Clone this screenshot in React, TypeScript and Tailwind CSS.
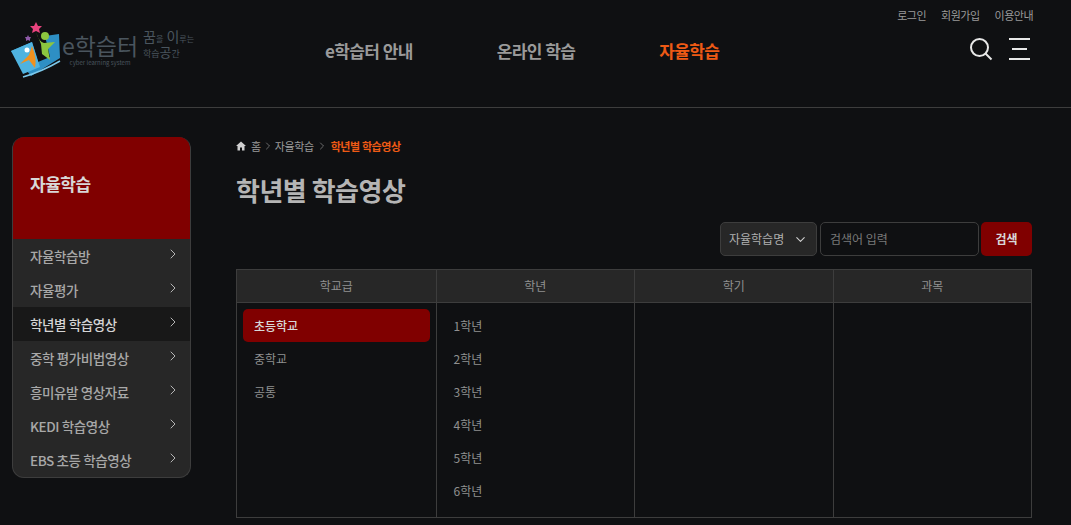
import { ChevronDown, ChevronRight } from "lucide-react";

const menu = ["자율학습방", "자율평가", "학년별 학습영상", "중학 평가비법영상", "흥미유발 영상자료", "KEDI 학습영상", "EBS 초등 학습영상"];
const columns = ["학교급", "학년", "학기", "과목"];
const grades = ["1학년", "2학년", "3학년", "4학년", "5학년", "6학년"];

const Logo = () => (
  <div className="flex items-start w-[190px] h-[60px]">
    <svg width="50" height="60" viewBox="0 0 50 60" className="shrink-0">
      <path d="M0 31 L21 22 L27 42 L39 37 L34 16 L48 14 L49 38 L20 56 Z" fill="#2e8fc4" />
      <path d="M0 31 L21 22 L29 47 L12 54 Z" fill="#4fb3e0" />
      <path d="M12 57 Q30 52 49 41" stroke="#7cc8ea" strokeWidth="1.5" fill="none" />
      <path d="M21 26 Q26 38 24 48 L18 40 L9 44 L18 35 Z" fill="#f0911e" />
      <circle cx="16" cy="30" r="2.5" fill="#fff" />
      <path d="M25 12 Q28 22 33 23 L44 22 L37 29 L39 40 L31 34 L30 24 Z" fill="#8cc63f" />
      <circle cx="34" cy="16" r="4" fill="#8cc63f" />
      <path d="M25 2 L27 6 L31 6 L28 9 L29 13 L25 11 L21 13 L22 9 L19 6 L23 6 Z" fill="#e8437e" />
      <path d="M17 15 L18 17 L20 17 L19 19 L19 21 L17 20 L15 21 L15 19 L14 17 L16 17 Z" fill="#8e5aa8" />
    </svg>
    <div className="ml-[3px] mt-[11px] flex flex-col items-center w-[72px]">
      <span className="text-[23px] leading-[28px] text-[#4a555e] whitespace-nowrap">e학습터</span>
      <span className="text-[6px] leading-[8px] text-[#4a555e] whitespace-nowrap">cyber learning system</span>
    </div>
    <div className="ml-[7px] mt-[9px] flex flex-col text-[#4a555e] leading-none whitespace-nowrap">
      <span className="text-[14px]">꿈<span className="text-[8px]">을</span> 이<span className="text-[8px]">루는</span></span>
      <span className="text-[9px] mt-[2px]">학습<span className="text-[13px]">공</span>간</span>
    </div>
  </div>
);

const Header = () => (
  <header className="h-[108px] border-b border-[#3d3d3d] flex relative">
    <div className="pl-[11px] pt-[20px]"><Logo /></div>
    <nav className="flex gap-[84px] pl-[124px] pt-[38px] text-[17px] leading-[25px] font-bold tracking-[-0.6px] text-[#9a9a9a]">
      <span>e학습터 안내</span>
      <span>온라인 학습</span>
      <span className="text-[#ee5a15]">자율학습</span>
    </nav>
    <div className="absolute right-[38px] top-[7px] flex gap-[15px] text-[11px] leading-[16px] text-[#9a9a9a] tracking-[-0.5px]">
      <span>로그인</span>
      <span>회원가입</span>
      <span>이용안내</span>
    </div>
    <div className="absolute right-[41px] top-[37px] flex items-center gap-[16px]">
      <svg width="24" height="24" viewBox="0 0 24 24" fill="none" stroke="#e8e8e8" strokeWidth="2">
        <circle cx="10.5" cy="10.5" r="8.5" />
        <path d="M16.5 16.5 L22.5 22.5" />
      </svg>
      <div className="w-[21px] flex flex-col items-end gap-[8px]">
        <span className="h-[2px] w-[21px] bg-[#e8e8e8]" />
        <span className="h-[2px] w-[15px] bg-[#e8e8e8] mr-[3px]" />
        <span className="h-[2px] w-[21px] bg-[#e8e8e8]" />
      </div>
    </div>
  </header>
);

const Sidebar = () => (
  <aside className="w-[179px] shrink-0 h-[341px] rounded-[12px] overflow-hidden bg-[#272727] border-b border-x border-[#3d3d3d] box-border">
    <div className="h-[102px] -mx-px bg-[#800000] pl-[18px] pt-[33px] text-[17px] leading-[28px] font-bold text-[#d8d8d8] tracking-[-0.5px]">자율학습</div>
    <ul>
      {menu.map((m, i) => (
        <li key={m} className={`h-[34px] flex items-center justify-between pl-[17px] pr-[9px] text-[13.5px] font-medium tracking-[-0.4px] ${i === 2 ? "bg-[#181818] text-[#d5d5d5]" : "text-[#a8a8a8]"}`}>
          <span>{m}</span>
          <ChevronRight size={16} strokeWidth={1.5} className="text-[#b5b5b5] -mt-[4px]" />
        </li>
      ))}
    </ul>
  </aside>
);

const Breadcrumb = () => (
  <div className="flex items-center h-[16px] text-[11px] tracking-[-0.4px] text-[#9a9a9a]">
    <svg width="10" height="10" viewBox="0 0 10 10" fill="#d0d0d0"><path d="M5 0.5 L10 5 H8.5 V9.5 H6 V6.5 H4 V9.5 H1.5 V5 H0 Z" /></svg>
    <span className="ml-[5px]">홈</span>
    <ChevronRight size={12} strokeWidth={1.3} className="mx-[1px]" />
    <span>자율학습</span>
    <ChevronRight size={12} strokeWidth={1.3} className="mx-[2px]" />
    <span className="font-bold text-[#ee5a15] ml-[1px]">학년별 학습영상</span>
  </div>
);

const SearchBar = () => (
  <div className="flex justify-end gap-[3px] h-[34px] mt-[13px]">
    <div className="w-[97px] rounded-[5px] border border-[#3d3d3d] bg-[#272727] flex items-center justify-between pl-[8px] pr-[8px] text-[12px] text-[#b0b0b0]">
      <span>자율학습명</span>
      <ChevronDown size={15} strokeWidth={1.7} className="text-[#d0d0d0]" />
    </div>
    <div className="w-[159px] rounded-[5px] border border-[#3d3d3d] flex items-center pl-[9px] text-[12px] text-[#7a7a7a]">검색어 입력</div>
    <button className="w-[51px] ml-[-1px] rounded-[5px] bg-[#800000] text-[12px] font-bold text-[#d8d8d8]">검색</button>
  </div>
);

const Table = () => (
  <div className="mt-[13px] h-[249px] border border-[#3d3d3d] grid grid-cols-4 grid-rows-[33px_1fr]">
    {columns.map((c, i) => (
      <div key={c} className={`bg-[#272727] border-b border-[#3d3d3d] flex items-center justify-center text-[12px] text-[#909090] ${i > 0 ? "border-l" : ""}`}>{c}</div>
    ))}
    <div className="pt-[6px] px-[6px] text-[12px] text-[#909090]">
      <div className="h-[33px] pl-[11px] flex items-center rounded-[5px] bg-[#800000] font-medium text-[#d8d8d8]">초등학교</div>
      <div className="h-[33px] pl-[11px] flex items-center">중학교</div>
      <div className="h-[33px] pl-[11px] flex items-center">공통</div>
    </div>
    <div className="border-l border-[#3d3d3d] pt-[6px] px-[6px] text-[12px] text-[#909090]">
      {grades.map((g) => (
        <div key={g} className="h-[33px] pl-[11px] flex items-center">{g}</div>
      ))}
    </div>
    <div className="border-l border-[#3d3d3d]" />
    <div className="border-l border-[#3d3d3d]" />
  </div>
);

export default function App() {
  return (
    <div className="w-[1071px] h-[525px] overflow-hidden bg-[#0f1012] font-['Noto_Sans_CJK_KR',sans-serif]">
      <Header />
      <div className="flex pl-[12px] pt-[29px]">
        <Sidebar />
        <main className="ml-[45px] w-[796px]">
          <div className="pt-[1px]"><Breadcrumb /></div>
          <h1 className="mt-[17px] text-[26px] leading-[38px] font-bold text-[#b5b5b5] tracking-[-0.5px]">학년별 학습영상</h1>
          <SearchBar />
          <Table />
        </main>
      </div>
    </div>
  );
}
